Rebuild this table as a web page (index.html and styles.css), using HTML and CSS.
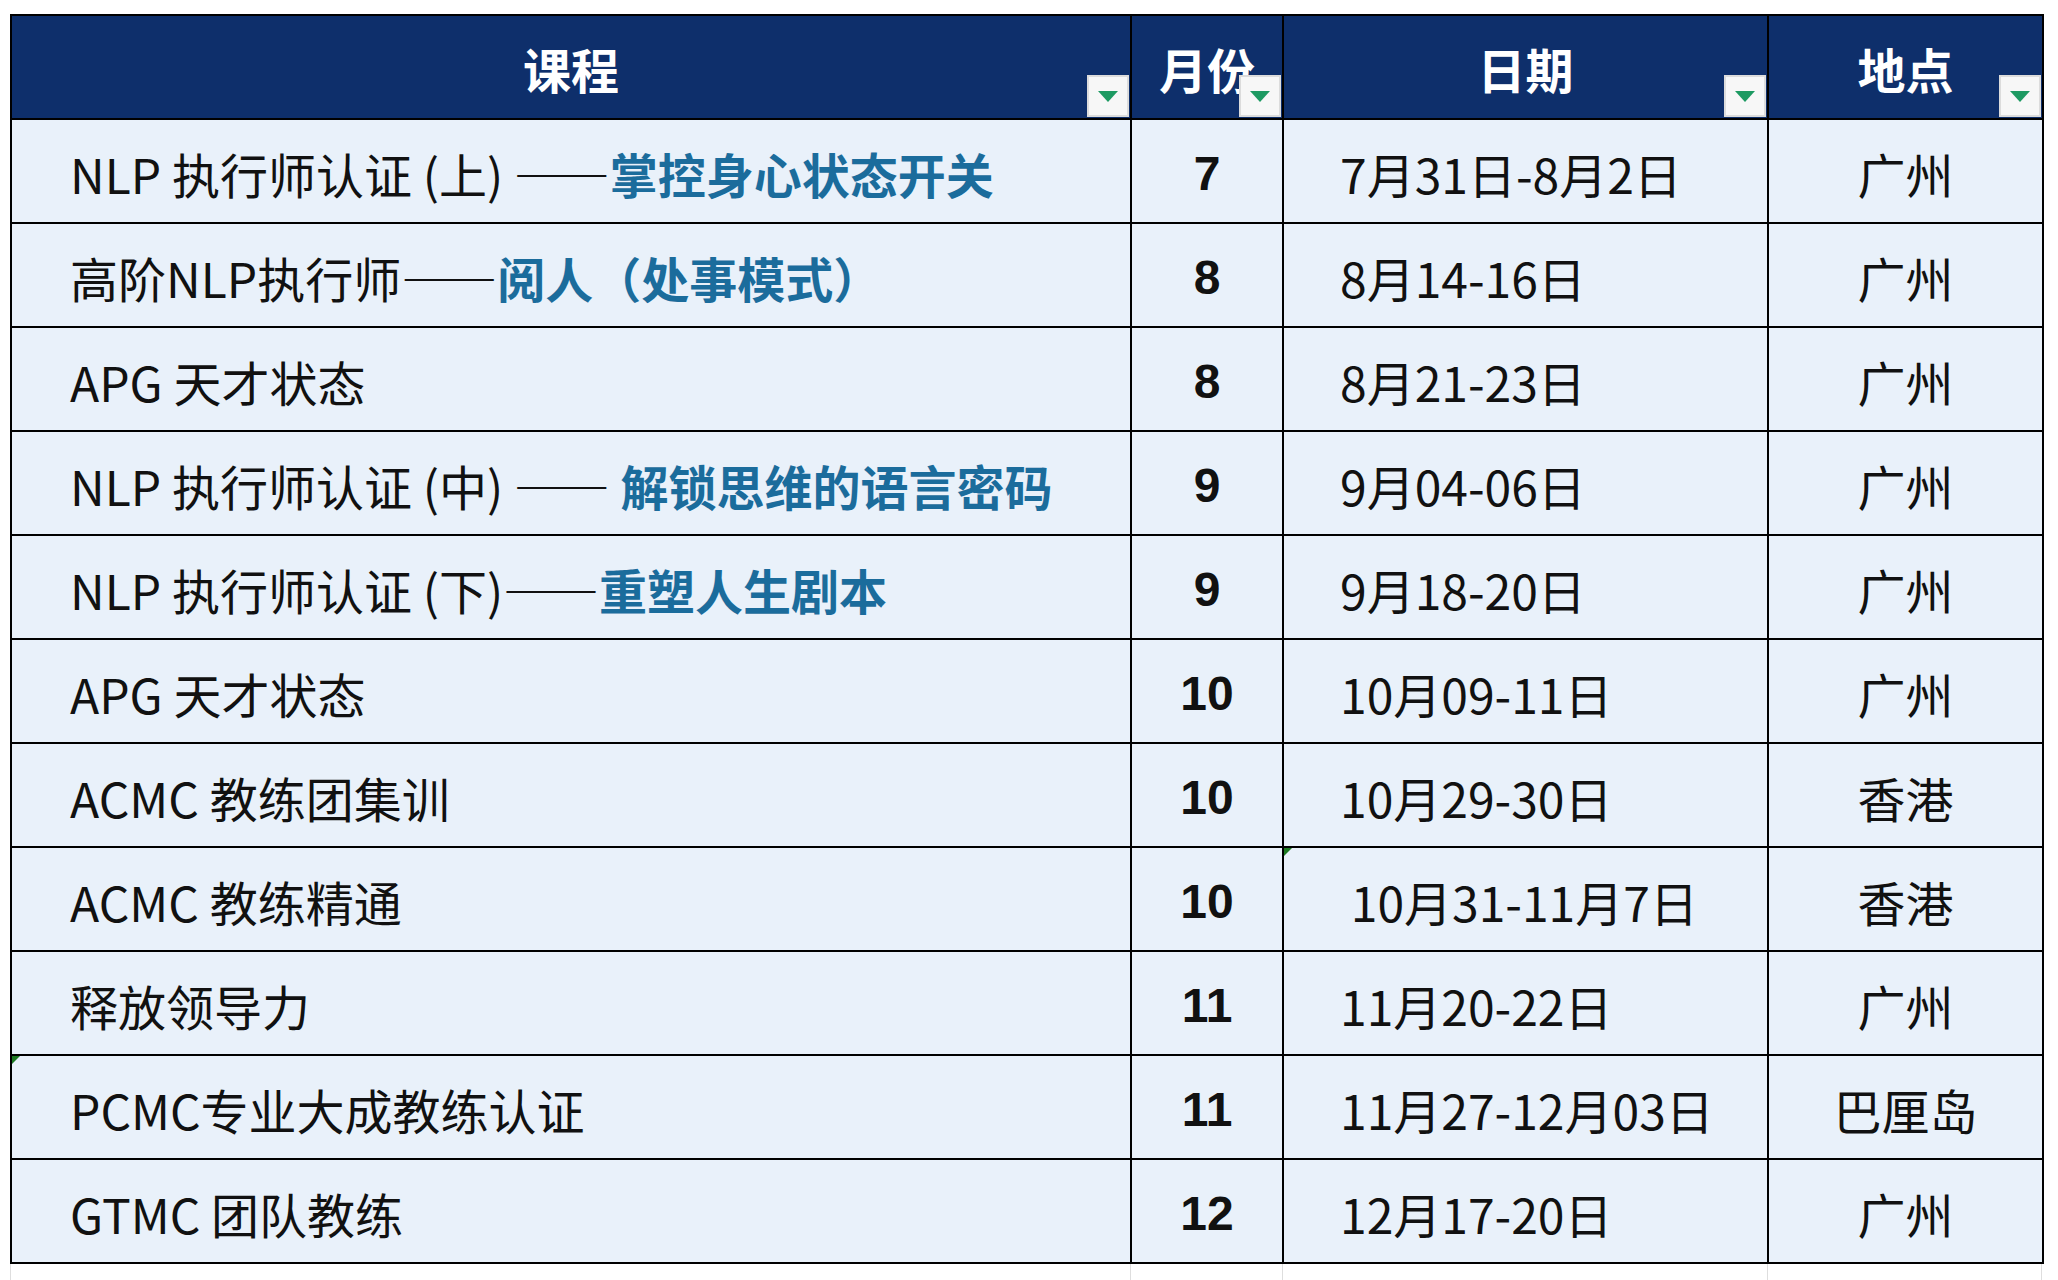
FILE: index.html
```html
<!DOCTYPE html>
<html lang="zh-CN">
<head>
<meta charset="utf-8">
<title>课程安排</title>
<link rel="stylesheet" href="styles.css">
</head>
<body>
<div class="sheet">
  <table class="schedule">
    <colgroup>
      <col class="c-course"><col class="c-month"><col class="c-date"><col class="c-place">
    </colgroup>
    <thead>
      <tr>
        <th><span class="h">课程</span><span class="filter"><svg viewBox="0 0 22 12"><path d="M0 0H22L11 12Z"/></svg></span></th>
        <th><span class="h">月份</span><span class="filter"><svg viewBox="0 0 22 12"><path d="M0 0H22L11 12Z"/></svg></span></th>
        <th><span class="h">日期</span><span class="filter"><svg viewBox="0 0 22 12"><path d="M0 0H22L11 12Z"/></svg></span></th>
        <th><span class="h">地点</span><span class="filter"><svg viewBox="0 0 22 12"><path d="M0 0H22L11 12Z"/></svg></span></th>
      </tr>
    </thead>
    <tbody>
      <tr><td class="course">NLP 执行师认证 (上) ——<b>掌控身心状态开关</b></td><td class="month">7</td><td class="date">7月31日-8月2日</td><td class="place">广州</td></tr>
      <tr><td class="course">高阶NLP执行师——<b>阅人（处事模式）</b></td><td class="month">8</td><td class="date">8月14-16日</td><td class="place">广州</td></tr>
      <tr><td class="course">APG 天才状态</td><td class="month">8</td><td class="date">8月21-23日</td><td class="place">广州</td></tr>
      <tr><td class="course">NLP 执行师认证 (中) —— <b>解锁思维的语言密码</b></td><td class="month">9</td><td class="date">9月04-06日</td><td class="place">广州</td></tr>
      <tr><td class="course">NLP 执行师认证 (下)——<b>重塑人生剧本</b></td><td class="month">9</td><td class="date">9月18-20日</td><td class="place">广州</td></tr>
      <tr><td class="course">APG 天才状态</td><td class="month">10</td><td class="date">10月09-11日</td><td class="place">广州</td></tr>
      <tr><td class="course">ACMC 教练团集训</td><td class="month">10</td><td class="date">10月29-30日</td><td class="place">香港</td></tr>
      <tr><td class="course">ACMC 教练精通</td><td class="month">10</td><td class="date flag">&nbsp;10月31-11月7日</td><td class="place">香港</td></tr>
      <tr><td class="course">释放领导力</td><td class="month">11</td><td class="date">11月20-22日</td><td class="place">广州</td></tr>
      <tr><td class="course flag">PCMC专业大成教练认证</td><td class="month">11</td><td class="date">11月27-12月03日</td><td class="place">巴厘岛</td></tr>
      <tr><td class="course">GTMC 团队教练</td><td class="month">12</td><td class="date">12月17-20日</td><td class="place">广州</td></tr>
    </tbody>
  </table>
  <div class="grid-below"><span></span><span></span><span></span><span></span></div>
</div>
</body>
</html>
```
FILE: styles.css
```css
html, body {
  margin: 0;
  padding: 0;
  background: #ffffff;
}

.sheet {
  padding: 14px 0 0 10px;
  width: 2032px;
}

.schedule {
  border-collapse: collapse;
  table-layout: fixed;
  width: 2032px;
  font-family: "Noto Sans CJK SC", "Noto Sans", sans-serif;
  font-size: 48px;
  color: #111;
}

.c-course { width: 1120px; }
.c-month { width: 152px; }
.c-date { width: 485px; }
.c-place { width: 275px; }

.schedule th,
.schedule td {
  border: 2px solid #000;
  padding: 0;
  position: relative;
  white-space: nowrap;
}

.schedule th {
  height: 102px;
  background: #0e2f6b;
  color: #fff;
  font-weight: 700;
  text-align: center;
}

.schedule th .h {
  position: relative;
  top: 1px;
}

.schedule td {
  height: 98px;
  padding-top: 4px;
  background: #e9f1fa;
}

.course {
  text-align: left;
  padding-left: 58px !important;
}

.course b {
  color: #1b6c9c;
  font-weight: 700;
}

.month {
  text-align: center;
  font-family: "Liberation Sans", Arial, sans-serif;
  font-weight: 700;
}

.date {
  text-align: left;
  padding-left: 56px !important;
}

.place {
  text-align: center;
}

.filter {
  position: absolute;
  right: 1px;
  bottom: 1px;
  width: 42px;
  height: 42px;
  box-sizing: border-box;
  background: #f7f7f7;
  border: 2px solid #dcdcdc;
  display: flex;
  align-items: center;
  justify-content: center;
}

.filter svg {
  width: 20px;
  height: 11px;
  fill: #1d9a62;
}

.flag::before {
  content: "";
  position: absolute;
  left: 0;
  top: 0;
  border-style: solid;
  border-width: 8px 8px 0 0;
  border-color: #1d7a22 transparent transparent transparent;
}

.grid-below {
  display: grid;
  grid-template-columns: 1120px 152px 485px 275px;
  height: 20px;
}

.grid-below span {
  border-left: 1px solid #dedede;
}

.grid-below span:last-child {
  border-right: 1px solid #dedede;
}
```
